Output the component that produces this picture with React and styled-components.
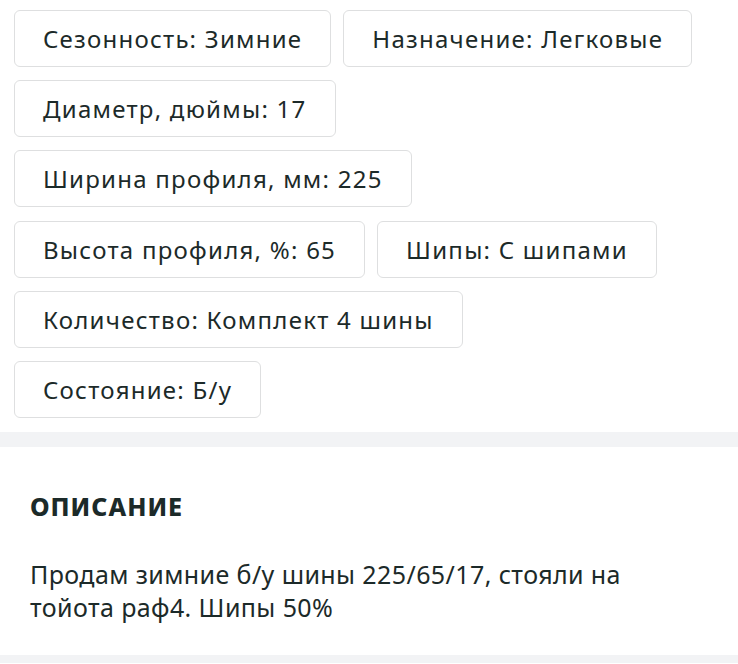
import React from "react";
import styled, { createGlobalStyle } from "styled-components";

const Global = createGlobalStyle`
  html, body { margin: 0; padding: 0; background: #ffffff; }
  body { font-family: "Noto Sans", "Open Sans", sans-serif; color: #1c2a29; }
`;

const Page = styled.div`
  width: 738px;
  background: #f2f3f5;
  display: flex;
  flex-direction: column;
  gap: 15px;
`;

const ChipsSection = styled.section`
  background: #fff;
  display: flex;
  flex-direction: column;
  gap: 13.4px;
  padding: 9.5px 14px 14px;
`;

const ChipRow = styled.div`
  display: flex;
  gap: 12px;
`;

const Chip = styled.div`
  box-sizing: border-box;
  height: 57px;
  display: flex;
  align-items: center;
  padding: 0 28px;
  border: 1.5px solid #dedfe0;
  border-radius: 6px;
  font-size: 24px;
  letter-spacing: 1.25px;
  color: #1c2a29;
  white-space: nowrap;
`;

const DescSection = styled.section`
  background: #fff;
  padding: 44px 30px 31px;
  margin-bottom: 8px;
`;

const Heading = styled.h2`
  margin: 0 0 37px;
  font-size: 25px;
  line-height: 30px;
  font-weight: 800;
  letter-spacing: 1px;
  color: #1c2a29;
`;

const Text = styled.p`
  margin: 0;
  font-size: 25px;
  line-height: 33px;
  letter-spacing: 0.4px;
  color: #1c2a29;
  max-width: 640px;
`;

const rows = [
  ["Сезонность: Зимние", "Назначение: Легковые"],
  ["Диаметр, дюймы: 17"],
  ["Ширина профиля, мм: 225"],
  ["Высота профиля, %: 65", "Шипы: С шипами"],
  ["Количество: Комплект 4 шины"],
  ["Состояние: Б/у"],
];

export default function App() {
  return (
    <>
      <Global />
      <Page>
        <ChipsSection>
          {rows.map((row, i) => (
            <ChipRow key={i}>
              {row.map((c) => (
                <Chip key={c}>{c}</Chip>
              ))}
            </ChipRow>
          ))}
        </ChipsSection>
        <DescSection>
          <Heading>ОПИСАНИЕ</Heading>
          <Text>
            Продам зимние б/у шины 225/65/17, стояли на тойота раф4. Шипы 50%
          </Text>
        </DescSection>
      </Page>
    </>
  );
}
